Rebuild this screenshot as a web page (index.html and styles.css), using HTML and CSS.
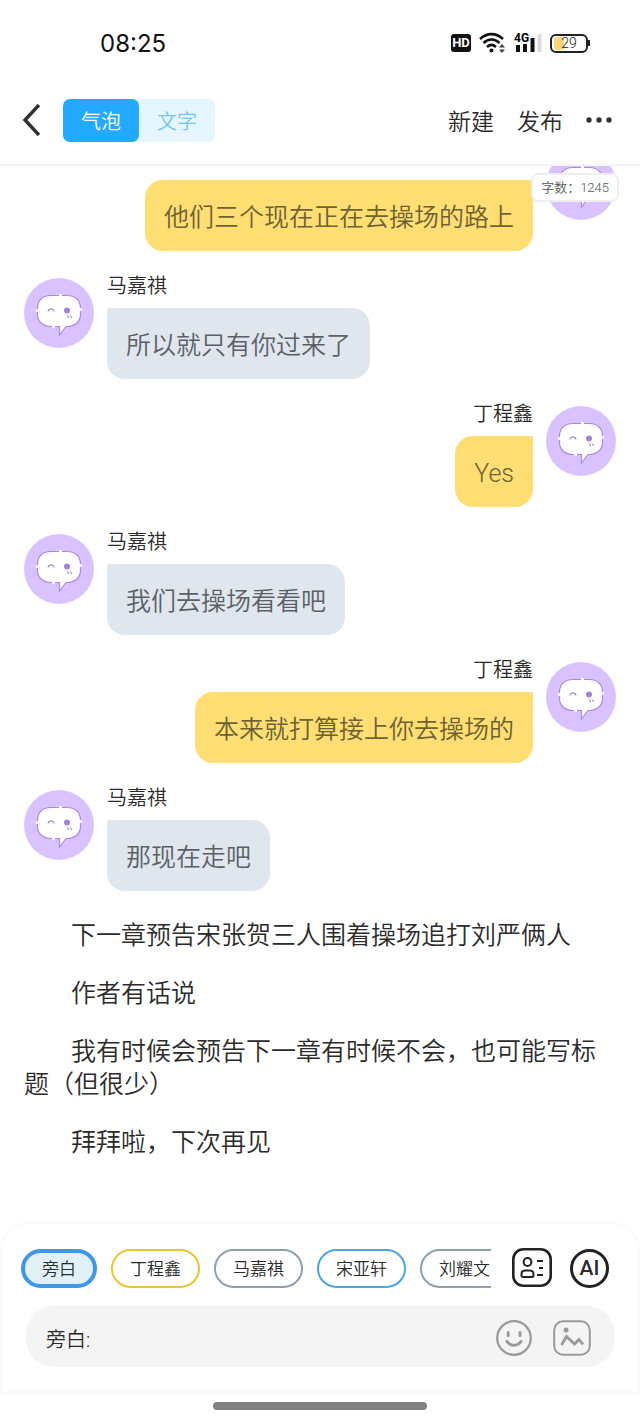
FILE: index.html
```html
<!DOCTYPE html>
<html lang="zh-CN">
<head>
<meta charset="utf-8">
<meta name="viewport" content="width=device-width, initial-scale=1">
<title>气泡</title>
<link rel="stylesheet" href="styles.css">
</head>
<body>
<svg class="sprite" aria-hidden="true">
  <symbol id="avatar" viewBox="0 0 70 70">
    <circle cx="35" cy="35" r="35" fill="#d9c2ff"/>
    <path d="M27 17.500H43C51 17.500 56.500 22 56.500 30V36C56.500 44 51 48.500 43 48.500H42L35.500 57V48.500H27C19 48.500 13.500 44 13.500 36V30C13.500 22 19 17.500 27 17.500Z" fill="#fff" stroke="#a98bd8" stroke-width="1.200"/>
    <path d="M35 17.500h3M13.500 31v3M56.500 30v3M28 48.500h3" fill="none" stroke="#fff" stroke-width="2.400"/>
    <path d="M24 33.500c1-3.500 5-3.500 6 0M43 37.500l2 2.500M46 37.500l2 2.500" fill="none" stroke="#a98bd2" stroke-width="1.200"/>
    <circle cx="43" cy="32.500" r="3" fill="#a77fe0"/>
  </symbol>
</svg>
<div class="app">
  <div class="status">
    <time class="status__time">08:25</time>
    <div class="status__icons">
      <span class="status__hd">HD</span>
      <svg class="status__wifi" viewBox="0 0 27 22" aria-hidden="true">
        <g fill="none" stroke="#111" stroke-width="2.600"><path d="M1 7C8 .5 17 .5 24 7M4.500 11C9.500 6.500 15.500 6.500 20.500 11M8 15C11 12.300 14 12.300 17 15"/></g>
        <circle cx="12.500" cy="18.500" r="2" fill="#111"/>
        <path d="M20 15.500l3-3.500 3 3.500zM20 17.500l3 3.500 3-3.500z" fill="#444"/>
      </svg>
      <svg class="status__signal" viewBox="0 0 28 22" aria-hidden="true">
        <text x="0" y="10" class="status__net">4G</text>
        <path d="M2 13h4v7H2zM9 12h4v8H9zM16.500 6h4v14h-4z" fill="#111"/>
        <path d="M23.500 2h4v18h-4z" fill="#dcdcdc"/>
      </svg>
      <span class="battery"><span class="battery__level">29</span></span>
    </div>
  </div>

  <header class="header">
    <button class="header__back" aria-label="返回">
      <svg width="18" height="32" viewBox="0 0 18 32" fill="none" stroke="#333" stroke-width="3.500"><path d="M17 1L3 16l14 15"/></svg>
    </button>
    <div class="switch">
      <button class="switch__item switch__item--on">气泡</button>
      <button class="switch__item">文字</button>
    </div>
    <nav class="header__actions">
      <button class="header__action">新建</button>
      <button class="header__action">发布</button>
      <button class="header__more" aria-label="更多">
        <svg width="26" height="6" viewBox="0 0 26 6" fill="#333"><circle cx="3" cy="3" r="2.700"/><circle cx="13" cy="3" r="2.700"/><circle cx="23" cy="3" r="2.700"/></svg>
      </button>
    </nav>
  </header>

  <main class="chat">
    <div class="counter">字数：1245</div>
    <div class="chat__list">
      <article class="message message--right">
        <svg class="message__avatar"><use href="#avatar"/></svg>
        <div class="message__body"><div class="message__name"></div><p class="message__bubble">他们三个现在正在去操场的路上</p></div>
      </article>
      <article class="message">
        <svg class="message__avatar"><use href="#avatar"/></svg>
        <div class="message__body"><div class="message__name">马嘉祺</div><p class="message__bubble">所以就只有你过来了</p></div>
      </article>
      <article class="message message--right">
        <svg class="message__avatar"><use href="#avatar"/></svg>
        <div class="message__body"><div class="message__name">丁程鑫</div><p class="message__bubble">Yes</p></div>
      </article>
      <article class="message">
        <svg class="message__avatar"><use href="#avatar"/></svg>
        <div class="message__body"><div class="message__name">马嘉祺</div><p class="message__bubble">我们去操场看看吧</p></div>
      </article>
      <article class="message message--right">
        <svg class="message__avatar"><use href="#avatar"/></svg>
        <div class="message__body"><div class="message__name">丁程鑫</div><p class="message__bubble">本来就打算接上你去操场的</p></div>
      </article>
      <article class="message">
        <svg class="message__avatar"><use href="#avatar"/></svg>
        <div class="message__body"><div class="message__name">马嘉祺</div><p class="message__bubble">那现在走吧</p></div>
      </article>
    </div>
    <div class="narration">
      <p>下一章预告宋张贺三人围着操场追打刘严俩人</p>
      <p>作者有话说</p>
      <p>我有时候会预告下一章有时候不会，也可能写标题（但很少）</p>
      <p>拜拜啦，下次再见</p>
    </div>
  </main>

  <footer class="composer">
    <div class="roles">
      <div class="roles__list">
        <button class="chip chip--on">旁白</button>
        <button class="chip chip--yellow">丁程鑫</button>
        <button class="chip">马嘉祺</button>
        <button class="chip chip--blue">宋亚轩</button>
        <button class="chip">刘耀文</button>
      </div>
      <button class="tool" aria-label="角色">
        <svg width="40" height="40" viewBox="0 0 40 40" fill="none" stroke="#222" stroke-width="2"><rect x="1.300" y="1.300" width="37.400" height="36.400" rx="10" stroke-width="2.600"/><circle cx="15.500" cy="14" r="3.900"/><path d="M13 22.500h5c2 0 3.500 1.500 3.500 3.500v1.500c0 1-.6 1.500-1.500 1.500h-9c-1 0-1.500-.5-1.500-1.500V26c0-2 1.500-3.500 3.500-3.500zM25 13h6M27 20h4M25 27h6"/></svg>
      </button>
      <button class="tool tool--ai">AI</button>
    </div>
    <div class="entry">
      <label class="entry__label" for="entry">旁白:</label>
      <input class="entry__input" id="entry" type="text">
      <button class="tool" aria-label="表情">
        <svg width="36" height="36" viewBox="0 0 36 36" fill="none" stroke="#999" stroke-width="2.200" stroke-linecap="round"><circle cx="18" cy="18" r="16.800"/><path d="M12.200 12.500v3M24 12.500v3" stroke-width="3"/><path d="M11 21.500c3.500 5 10.500 5 14 0" stroke-width="3"/></svg>
      </button>
      <button class="tool" aria-label="图片">
        <svg width="38" height="36" viewBox="0 0 38 36" fill="none" stroke="#999" stroke-width="2"><rect x="1.200" y="1.200" width="35.600" height="33.600" rx="9"/><circle cx="13" cy="10" r="2.500" fill="#999" stroke="none"/><path d="M8.500 25l5-8.500 8 7.500 4.500-4.500 4 5" stroke-width="2.800"/></svg>
      </button>
    </div>
  </footer>
  <div class="home"><span class="home__bar"></span></div>
</div>
</body>
</html>
```
FILE: styles.css
```css
* { box-sizing: border-box; }

body {
  margin: 0;
  background: #fff;
  color: #2b2b2b;
  font-family: Roboto, "Noto Sans CJK SC", sans-serif;
  font-weight: 350;
}

p { margin: 0; }

button, input {
  padding: 0;
  border: 0;
  background: none;
  color: inherit;
  font: inherit;
}

svg { display: block; }

.sprite { position: absolute; width: 0; height: 0; }

.app {
  display: flex;
  flex-direction: column;
  min-height: 100vh;
}

/* Status bar */
.status {
  display: flex;
  align-items: center;
  justify-content: space-between;
  height: 80px;
  padding: 6px 52px 0 100px;
}

.status__time {
  color: #111;
  font-family: Inter, sans-serif;
  font-size: 24px;
  font-weight: 400;
}

.status__icons { display: flex; align-items: center; gap: 8px; }

.status__hd {
  width: 20px;
  border-radius: 3px;
  background: #111;
  color: #fff;
  font-size: 13px;
  font-weight: 700;
  line-height: 18px;
  text-align: center;
}

.status__wifi { width: 27px; height: 22px; }
.status__signal { width: 28px; height: 22px; }
.status__net { font-size: 12px; font-weight: 700; }

.battery {
  position: relative;
  width: 38px;
  border: 2px solid #222;
  border-radius: 6px;
  background: linear-gradient(to right, #ffd57e 10px, #fff 10px) content-box;
  padding: 1px 2px;
}

.battery::after {
  position: absolute;
  top: 4px;
  right: -4px;
  width: 2px;
  height: 6px;
  background: #222;
  content: "";
}

.battery__level {
  display: block;
  color: #222;
  font-size: 14px;
  line-height: 13px;
  text-align: center;
}

/* Header */
.header {
  display: flex;
  align-items: center;
  height: 86px;
  padding: 0 28px 4px 22px;
  border-bottom: 2px solid #f5f5f5;
}

.header__back { margin-right: 23px; }

.switch {
  display: flex;
  border-radius: 7px;
  background: #e6f6ff;
}

.switch__item {
  width: 76px;
  padding-top: 4px;
  border-radius: 7px;
  color: #73c3f5;
  font-size: 20px;
  line-height: 39px;
}

.switch__item--on { background: #23a9ff; color: #fff; }

.header__actions {
  display: flex;
  align-items: center;
  gap: 23px;
  margin-left: auto;
}

.header__action { padding-top: 5px; font-size: 23px; line-height: 39px; }

/* Conversation */
.chat {
  position: relative;
  flex: 1;
  overflow: hidden;
  padding: 0 24px;
}

.counter {
  position: absolute;
  top: 7px;
  right: 21px;
  padding: 0 8px;
  border: 2px solid #eee;
  border-radius: 7px;
  background: #fff;
  color: #555;
  font-size: 13px;
  line-height: 25px;
}

.chat__list {
  display: grid;
  gap: 27px;
  margin-top: -16px;
}

.message { display: flex; align-items: flex-start; gap: 13px; }
.message--right { flex-direction: row-reverse; }

.message__avatar { flex: none; width: 70px; height: 70px; }

.message__body {
  display: flex;
  flex-direction: column;
  align-items: flex-start;
}

.message--right .message__body { align-items: flex-end; }

.message__name {
  min-height: 16px;
  margin-bottom: 14px;
  font-size: 20px;
  line-height: 16px;
}

.message__bubble {
  padding: 20px 19px 16px;
  border-radius: 2px 18px 18px 18px;
  background: #dfe6ee;
  color: #5c6066;
  font-size: 25px;
  line-height: 35px;
}

.message--right .message__bubble {
  border-radius: 18px 2px 18px 18px;
  background: #ffde73;
  color: #6e6134;
}

.narration {
  display: grid;
  gap: 25px;
  margin-top: 28px;
  font-size: 25px;
  line-height: 33px;
  text-indent: 47px;
}

/* Composer */
.composer {
  padding: 24px 23px 24px 19px;
  border: 2px solid #fafafa;
  border-radius: 28px 28px 0 0;
}

.roles { display: flex; align-items: center; gap: 18px; }

.roles__list {
  display: flex;
  flex: 1;
  gap: 14px;
  min-width: 0;
  margin-right: 3px;
  overflow: hidden;
}

.chip {
  flex: none;
  padding: 2px 17px 0;
  border: 2px solid #8e9fb0;
  border-radius: 20px;
  font-size: 17px;
  line-height: 33px;
}

.chip--on { border: 4px solid #4097ea; background: #e0f1fa; line-height: 29px; }
.chip--yellow { border-color: #eac435; }
.chip--blue { border-color: #4aa5e3; }

.tool { flex: none; }

.tool--ai {
  width: 39px;
  height: 39px;
  margin-right: 6px;
  border: 3px solid #222;
  border-radius: 50%;
  font-family: Roboto, sans-serif;
  font-size: 21px;
  font-weight: 500;
}

.entry {
  display: flex;
  align-items: center;
  gap: 21px;
  height: 61px;
  margin: 18px 0 0 5px;
  padding: 3px 24px 0 20px;
  border-radius: 28px;
  background: #f4f4f4;
}

.entry__label { font-size: 20px; }
.entry__input { flex: 1; min-width: 0; outline: 0; font-size: 20px; }

.home {
  display: flex;
  justify-content: center;
  padding: 9px 0 12px;
}

.home__bar {
  width: 33.4%;
  height: 8px;
  border-radius: 4px;
  background: #808080;
}
```
